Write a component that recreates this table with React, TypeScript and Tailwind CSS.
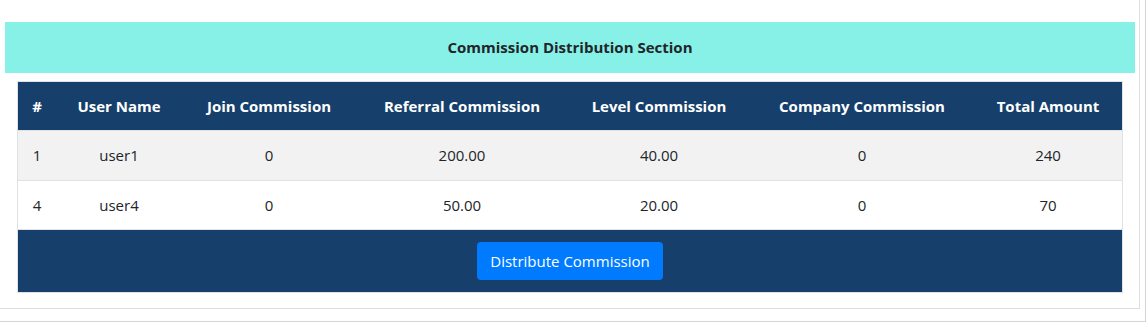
const columns = [
  { label: "#", width: "w-[38px]" },
  { label: "User Name", width: "w-[126px]" },
  { label: "Join Commission", width: "w-[174px]" },
  { label: "Referral Commission", width: "w-[212px]" },
  { label: "Level Commission", width: "w-[182px]" },
  { label: "Company Commission", width: "w-[224px]" },
  { label: "Total Amount", width: "w-[148px]" },
];

const rows = [
  { id: 1, user: "user1", join: "0", referral: "200.00", level: "40.00", company: "0", total: "240" },
  { id: 4, user: "user4", join: "0", referral: "50.00", level: "20.00", company: "0", total: "70" },
];

export default function App() {
  return (
    <div
      className="w-[1146px] h-[322px] bg-white border-r border-b border-[#d4d4d4]"
      style={{ fontFamily: '"Open Sans", "Noto Sans", sans-serif' }}
    >
      <div className="w-[1140px] h-[309px] border-r border-b border-[#dedede] pt-[22px] pl-[5px] pr-[4px]">
        <div className="h-[51px] bg-[#87f1e7] flex items-center justify-center">
          <h2 className="text-[15px] font-bold text-[#212529]">
            Commission Distribution Section
          </h2>
        </div>

        <div className="mx-[12px] mt-[8px] border border-[#dee2e6]">
          <table className="w-full table-fixed border-collapse text-[15px] text-[#212529]">
            <thead>
              <tr className="bg-[#163f6b] text-white h-[48px]">
                {columns.map((col) => (
                  <th key={col.label} className={`${col.width} font-bold text-center px-0`}>
                    {col.label}
                  </th>
                ))}
              </tr>
            </thead>
            <tbody>
              {rows.map((row, index) => (
                <tr
                  key={row.id}
                  className={`${index === 0 ? "bg-[#f2f2f2] h-[50px]" : "bg-white h-[49px]"} border-t border-[#dee2e6]`}
                >
                  <td className="text-center">{row.id}</td>
                  <td className="text-center">{row.user}</td>
                  <td className="text-center">{row.join}</td>
                  <td className="text-center">{row.referral}</td>
                  <td className="text-center">{row.level}</td>
                  <td className="text-center">{row.company}</td>
                  <td className="text-center">{row.total}</td>
                </tr>
              ))}
            </tbody>
          </table>
          <div className="h-[63px] bg-[#163f6b] flex items-center justify-center border-t border-[#dee2e6]">
            <button className="h-[38px] px-[13px] rounded-[4px] bg-[#007bff] text-white text-[15px]">
              Distribute Commission
            </button>
          </div>
        </div>
      </div>
    </div>
  );
}
